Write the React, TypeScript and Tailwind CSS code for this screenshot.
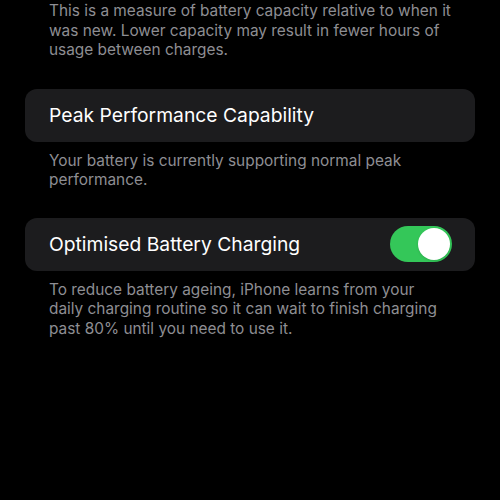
import React from 'react';

const Footnote = ({ lines }: { lines: string[] }) => (
  <p className="pl-[49px] text-[15.4px] leading-[19.5px] text-[#8e8e93]">
    {lines.map((line, i) => (
      <React.Fragment key={i}>
        {line}
        {i < lines.length - 1 && <br />}
      </React.Fragment>
    ))}
  </p>
);

const Toggle = ({ on }: { on: boolean }) => (
  <div
    className={`flex h-[36px] w-[62px] items-center rounded-full p-[2px] ${
      on ? 'justify-end bg-[#34c759]' : 'justify-start bg-[#39393d]'
    }`}
  >
    <div className="h-[32px] w-[32px] rounded-full bg-white shadow" />
  </div>
);

export default function App() {
  return (
    <div
      className="flex min-h-[500px] w-[500px] flex-col bg-black pt-[1px]"
      style={{ fontFamily: 'Inter, "Noto Sans", sans-serif' }}
    >
      <Footnote
        lines={[
          'This is a measure of battery capacity relative to when it',
          'was new. Lower capacity may result in fewer hours of',
          'usage between charges.',
        ]}
      />

      <div className="mx-[25px] mt-[29px] flex h-[53px] items-center rounded-xl bg-[#1c1c1e] px-[24px]">
        <span className="text-[19.3px] text-white">Peak Performance Capability</span>
      </div>

      <div className="mt-[9px]">
        <Footnote
          lines={[
            'Your battery is currently supporting normal peak',
            'performance.',
          ]}
        />
      </div>

      <div className="mx-[25px] mt-[28px] flex h-[53px] items-center justify-between rounded-xl bg-[#1c1c1e] pl-[24px] pr-[23px]">
        <span className="text-[19.3px] text-white">Optimised Battery Charging</span>
        <Toggle on />
      </div>

      <div className="mt-[9px]">
        <Footnote
          lines={[
            'To reduce battery ageing, iPhone learns from your',
            'daily charging routine so it can wait to finish charging',
            'past 80% until you need to use it.',
          ]}
        />
      </div>
    </div>
  );
}
